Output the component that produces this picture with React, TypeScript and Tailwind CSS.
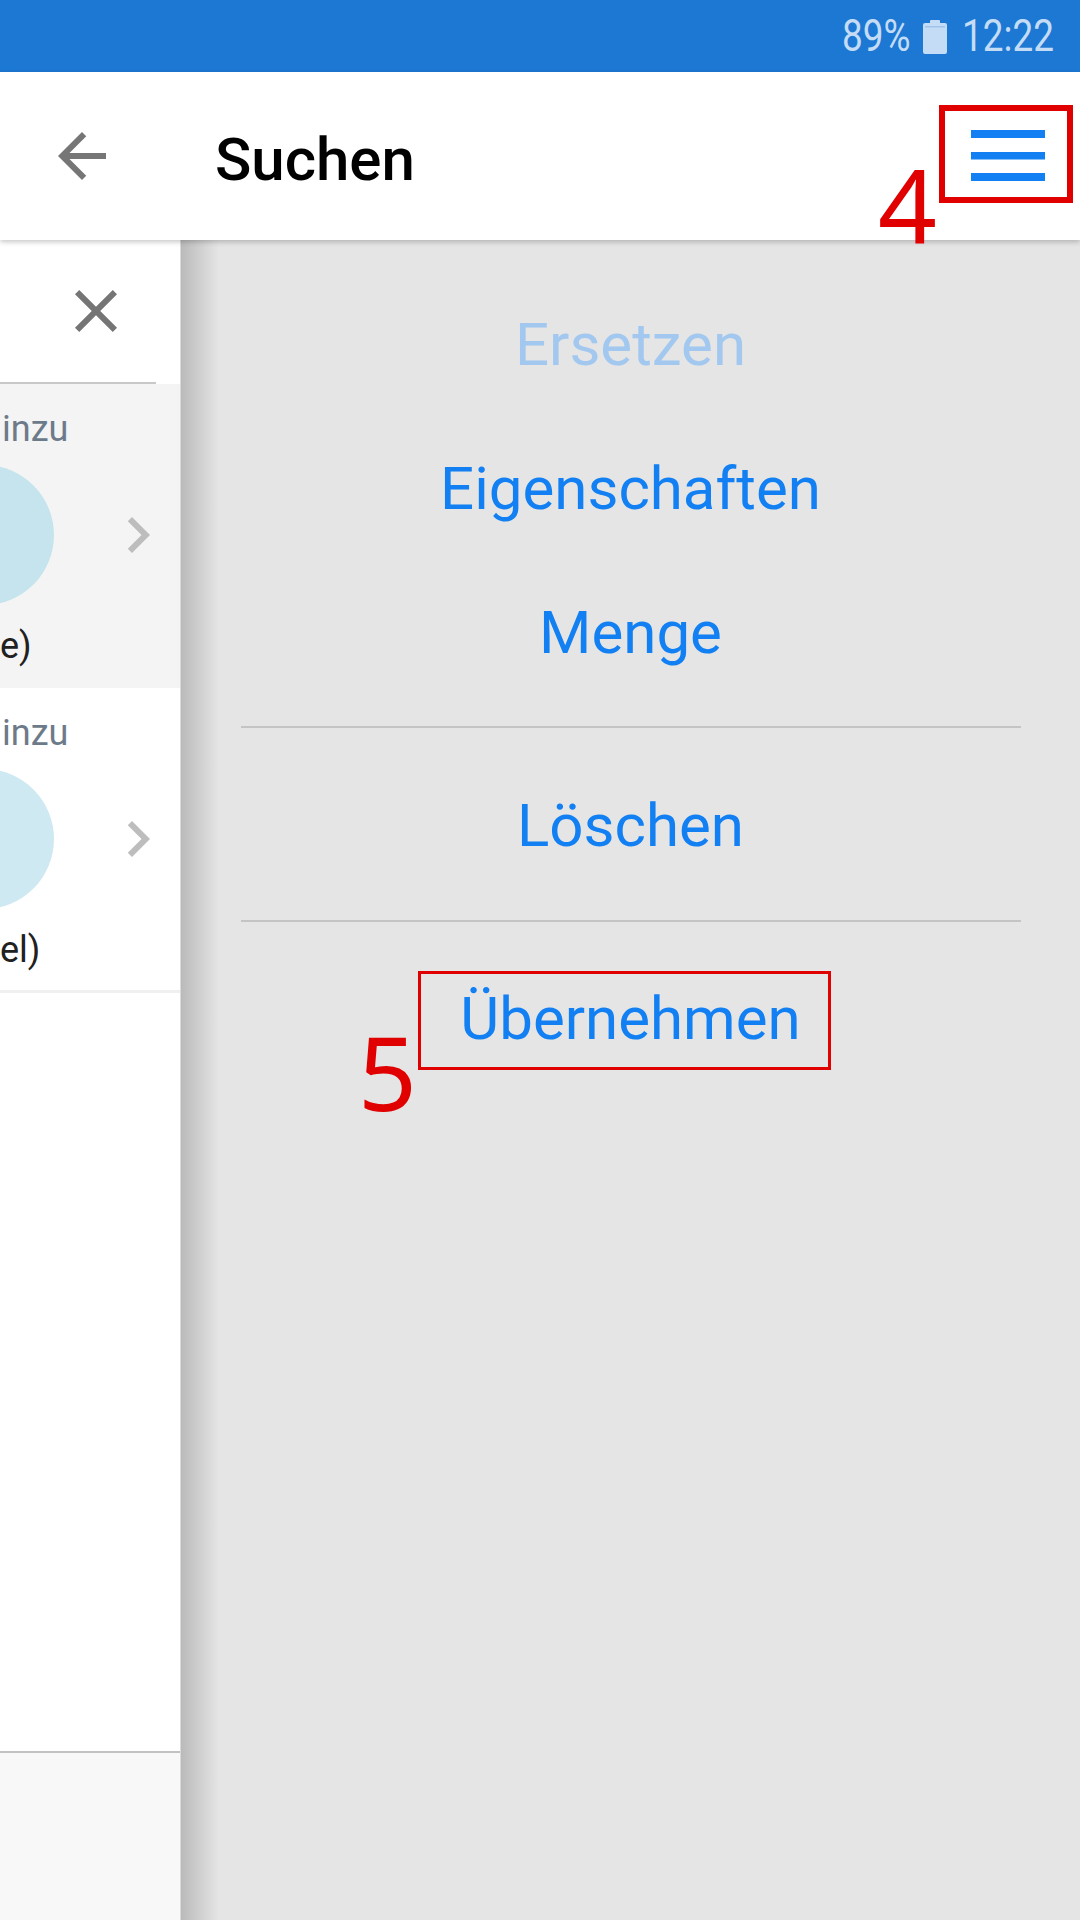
import React from "react";

const BLUE = "#1280f2";

function BackArrow() {
  return (
    <svg width="72" height="72" viewBox="0 0 24 24" className="shrink-0">
      <path
        d="M20 11H7.83l5.59-5.59L12 4l-8 8 8 8 1.41-1.41L7.83 13H20v-2z"
        fill="#767676"
      />
    </svg>
  );
}

function CloseIcon() {
  return (
    <svg width="72" height="72" viewBox="0 0 24 24" className="shrink-0">
      <path
        d="M19 6.41L17.59 5 12 10.59 6.41 5 5 6.41 10.59 12 5 17.59 6.41 19 12 13.41 17.59 19 19 17.59 13.41 12z"
        fill="#757575"
      />
    </svg>
  );
}

function Chevron() {
  return (
    <svg width="72" height="72" viewBox="0 0 24 24" className="shrink-0">
      <path d="M10 6L8.59 7.41 13.17 12l-4.58 4.59L10 18l6-6z" fill="#bdbdbd" />
    </svg>
  );
}

function Hamburger() {
  return (
    <svg width="74" height="51" viewBox="0 0 74 51" className="shrink-0">
      <rect x="0" y="0" width="74" height="8" fill={BLUE} />
      <rect x="0" y="22" width="74" height="7.5" fill={BLUE} />
      <rect x="0" y="43" width="74" height="8" fill={BLUE} />
    </svg>
  );
}

function Battery() {
  return (
    <svg width="24" height="34" viewBox="0 0 24 34" className="shrink-0">
      <rect x="7" y="0" width="10" height="4" rx="1" fill="#c4dcf5" />
      <rect x="0" y="3" width="24" height="31" rx="2" fill="#c4dcf5" />
      <rect x="2" y="6" width="20" height="1.5" fill="#9fc3ea" />
    </svg>
  );
}

function ListRow({
  label,
  tail,
  bg,
  circle,
  height,
}: {
  label: string;
  tail: string;
  bg: string;
  circle: string;
  height: string;
}) {
  return (
    <div className={`flex flex-col ${bg} ${height} shrink-0`}>
      <div className="mt-[24px] h-[42px] text-[36px] leading-[42px] text-[#6c7a89] whitespace-nowrap pl-[2px]">
        {label}
      </div>
      <div className="mt-[15px] flex items-center">
        <div className={`ml-[-86px] w-[140px] h-[140px] rounded-full shrink-0 ${circle}`} />
        <div className="ml-[48px]">
          <Chevron />
        </div>
      </div>
      <div className="mt-[20px] h-[42px] text-[36px] leading-[42px] text-[#212121] whitespace-nowrap">
        {tail}
      </div>
    </div>
  );
}

function MenuItem({ text, disabled }: { text: string; disabled?: boolean }) {
  return (
    <div
      className={`h-[144px] leading-[144px] text-[60px] whitespace-nowrap text-center ${
        disabled ? "text-[#a3c8f0]" : "text-[#1280f2]"
      }`}
    >
      {text}
    </div>
  );
}

export default function App() {
  return (
    <div className="relative w-[1080px] h-[1920px] overflow-hidden flex flex-col bg-white font-['Roboto',sans-serif]">
      {/* Status bar */}
      <div className="h-[72px] shrink-0 bg-[#1c78d3] flex items-center justify-end pr-[27px] text-[#c4dcf5]">
        <span className="w-[68px] h-[54px] text-[45px] leading-[54px] whitespace-nowrap">
          <span className="inline-block origin-left scale-x-[0.82]">89%</span>
        </span>
        <span className="ml-[13px] mt-[2px]">
          <Battery />
        </span>
        <span className="ml-[15px] w-[91px] h-[54px] text-[45px] leading-[54px] whitespace-nowrap">
          <span className="inline-block origin-left scale-x-[0.82]">12:22</span>
        </span>
      </div>

      {/* App bar */}
      <div className="relative z-20 h-[168px] shrink-0 bg-white flex items-center shadow-[0_2px_5px_rgba(0,0,0,0.22)]">
        <div className="ml-[46px]">
          <BackArrow />
        </div>
        <div className="ml-[97px] mt-[7px] text-[60px] leading-[70px] font-medium text-black">
          Suchen
        </div>
        <div className="ml-auto mr-[35px] mt-[-2px]">
          <Hamburger />
        </div>
      </div>

      {/* Body */}
      <div className="flex-1 flex min-h-0">
        {/* Left (slid) panel */}
        <div className="w-[181px] shrink-0 bg-white border-r border-[#dadada] flex flex-col overflow-hidden">
          <div className="h-[144px] shrink-0 flex flex-col">
            <div className="mt-[35px] ml-[60px]">
              <CloseIcon />
            </div>
            <div className="mt-[35px] w-[156px] h-[2px] bg-[#c8c8c8]" />
          </div>
          <ListRow
            label="inzu"
            tail="e)"
            bg="bg-[#f4f4f4]"
            circle="bg-[#c6e4ee]"
            height="h-[304px]"
          />
          <div className="h-[305px] shrink-0 border-b-[3px] border-[#f0f0f0]">
            <ListRow
              label="inzu"
              tail="el)"
              bg="bg-white"
              circle="bg-[#cfe9f3]"
              height="h-[302px]"
            />
          </div>
          <div className="h-[758px] shrink-0 bg-white" />
          <div className="h-[2px] shrink-0 bg-[#c2c2c2]" />
          <div className="flex-1 bg-[#f8f8f8]" />
        </div>

        {/* Right gray menu panel */}
        <div className="relative flex-1 bg-[#e5e5e5] flex flex-col items-center pt-[33px]">
          <div className="absolute left-0 top-0 bottom-0 w-[38px] bg-gradient-to-r from-[rgba(0,0,0,0.19)] to-transparent" />
          <MenuItem text="Ersetzen" disabled />
          <MenuItem text="Eigenschaften" />
          <MenuItem text="Menge" />
          <div className="mt-[21px] mb-[26px] w-[780px] h-[2px] bg-[#c4c4c4]" />
          <MenuItem text="Löschen" />
          <div className="mt-[22px] mb-[25px] w-[780px] h-[2px] bg-[#c4c4c4]" />
          <MenuItem text="Übernehmen" />
        </div>
      </div>

      {/* Annotations */}
      <div className="absolute left-[939px] top-[105px] w-[134px] h-[98px] border-[6px] border-[#e00000] z-30" />
      <div className="absolute left-[878px] top-[153px] text-[103px] leading-[103px] text-[#e00000] font-['Noto_Sans',sans-serif] z-30">
        4
      </div>
      <div className="absolute left-[418px] top-[971px] w-[413px] h-[99px] border-[3px] border-[#e00000] z-30" />
      <div className="absolute left-[358px] top-[1020px] text-[103px] leading-[103px] text-[#e00000] font-['Noto_Sans',sans-serif] z-30">
        5
      </div>
    </div>
  );
}
